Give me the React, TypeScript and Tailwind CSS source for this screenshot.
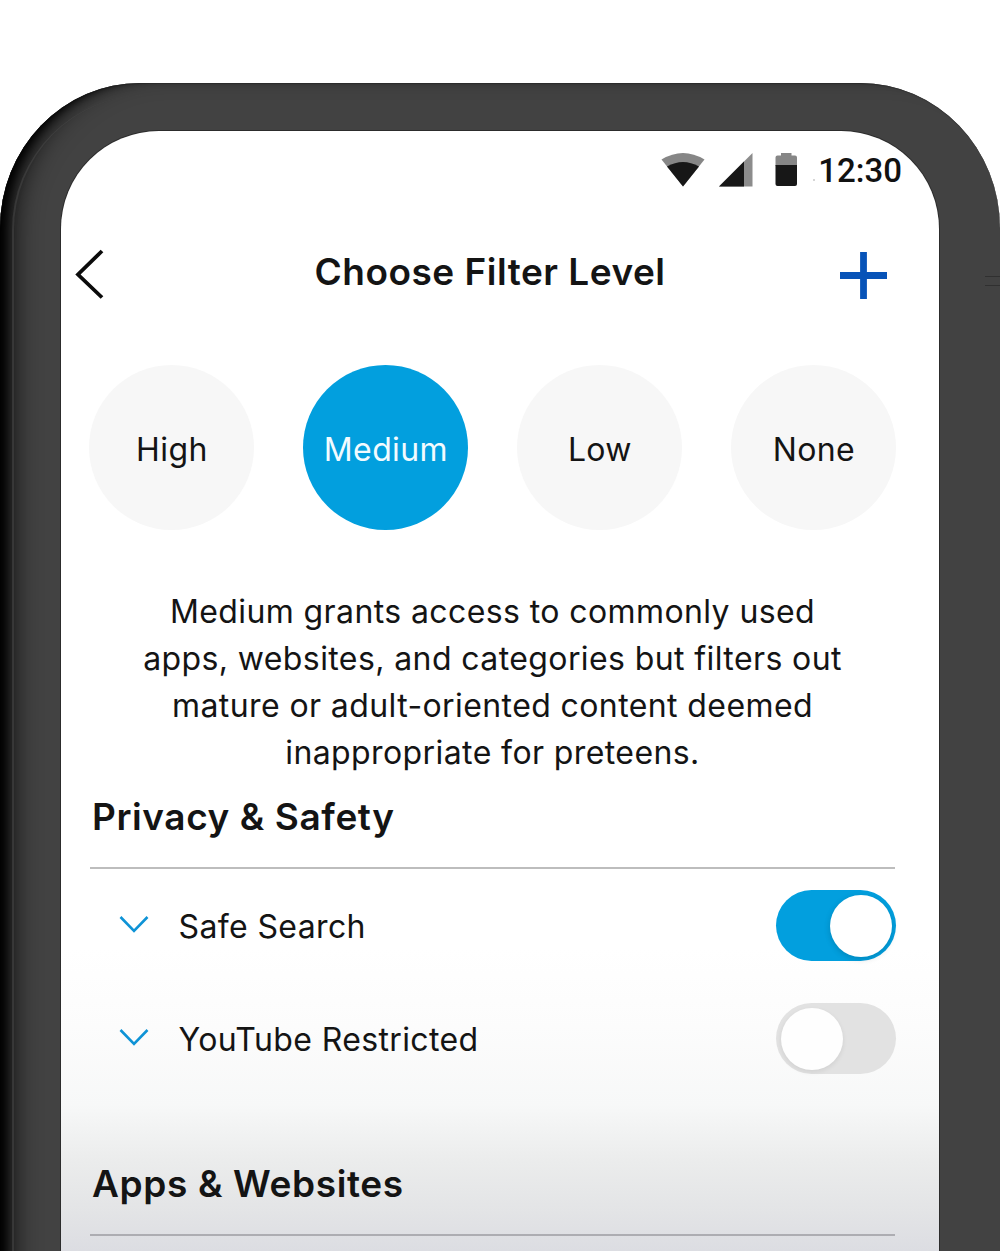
import React from "react";

const levels = ["High", "Medium", "Low", "None"];

function StatusBar() {
  return (
    <div className="flex h-[78px] items-center justify-end pr-[37px]">
      <svg className="mr-[14px] h-[34px] w-[44px]" viewBox="0 0 44 34">
        <path d="M0.5 6.5Q22 -6.5 43.500 6.500L22 33.500Z" fill="#868686" />
        <path d="M6 13.500Q22 4.500 38 13.500L22 33.500Z" fill="#171717" />
      </svg>
      <svg className="mr-[22px] h-[34px] w-[34px]" viewBox="0 0 34 34">
        <path d="M33.500 0V33.500H0Z" fill="#8c8c8c" />
        <path d="M25 8.500V33.500H0Z" fill="#171717" />
      </svg>
      <svg className="mr-[15px] h-[34px] w-[23px]" viewBox="0 0 23 34">
        <path d="M6 0H16.500V2.500H20Q22 2.500 22 4.500V13H0.500V4.500Q0.500 2.500 2.500 2.500H6Z" fill="#868686" />
        <path d="M0.500 12H22V31Q22 33 20 33H2.500Q0.500 33 0.500 31Z" fill="#171717" />
      </svg>
      <span className="mt-[20px] mr-[3px] size-[2px] rounded-full bg-[#c8c8c8]" />
      <span className="font-[Roboto,sans-serif] text-[33px] leading-none font-medium text-[#111]">12:30</span>
    </div>
  );
}

function Header() {
  return (
    <div className="flex h-[130px] items-center justify-between pr-[51px] pl-[14px]">
      <svg className="h-[50px] w-[30px]" viewBox="0 0 30 50" fill="none" stroke="#0b0b0b" strokeWidth="3.8">
        <path d="M27 2L3 25.500L27 48.500" />
      </svg>
      <h1 className="mb-[6px] ml-[35px] text-[37px] leading-none font-semibold tracking-[0.5px] whitespace-nowrap">Choose Filter Level</h1>
      <svg className="mt-[3px] h-[48px] w-[48px]" viewBox="0 0 48 48" fill="#0753b8">
        <path d="M20.100 0H26.900V20.100H47V26.900H26.900V47H20.100V26.900H0V20.100H20.100Z" />
      </svg>
    </div>
  );
}

function SettingRow({ label, on }: { label: string; on: boolean }) {
  return (
    <div className="flex h-[71px] items-center">
      <svg className="-mt-[2px] ml-[29px] h-[17px] w-[30px]" viewBox="0 0 30 17" fill="none" stroke="#0e93d6" strokeWidth="2.600">
        <path d="M1.500 1L15 15L28.500 1" />
      </svg>
      <span className="mt-[3px] ml-[29.5px] text-[32px] leading-none tracking-[0.37px]">{label}</span>
      <div className={on
        ? "ml-auto flex h-[71px] w-[120px] items-center justify-end rounded-full bg-[#029fde] pr-[4px]"
        : "ml-auto flex h-[71px] w-[120px] items-center justify-start rounded-full bg-[#e2e2e2] pl-[5px]"}>
        <div className={on
          ? "size-[62px] rounded-full bg-white shadow-[0_2px_6px_rgba(0,0,0,0.16)]"
          : "size-[62px] rounded-full bg-[#fefefe] shadow-[0_2px_5px_rgba(0,0,0,0.08)]"} />
      </div>
    </div>
  );
}

export default function App() {
  return (
    <main className="h-[1251px] w-[1000px] overflow-hidden bg-white pt-[83px] font-[Inter,sans-serif] text-[#141414]">
      <div className="relative h-[1240px] overflow-hidden rounded-t-[140px_145px] bg-[#424242] px-[61px] pt-[48px] shadow-[inset_11px_0_10px_-5px_#000,inset_28px_0_26px_-14px_rgba(0,0,0,0.75),inset_0_1px_0_#383838]">
        <div className="pointer-events-none absolute top-[12px] left-[12px] h-[1300px] w-[300px] rounded-tl-[135px] border-l-2 border-[#4a4a4a]/50" />
        <div className="absolute top-[193px] right-0 h-[10px] w-[15px] border-y border-[#303030]" />
        <div className="relative h-[1120px] rounded-t-[98px] bg-[linear-gradient(to_bottom,#fff_0%,#fff_73%,#fcfcfc_80%,#f7f8f8_87%,#ebecec_92%,#e3e4e6_96.5%,#dcdde2_100%)] shadow-[0_0_0_1px_#2c2c2c]">
          <StatusBar />
          <Header />
          <div className="mt-[26px] flex justify-between pr-[42.6px] pl-[28.4px]">
            {levels.map((level) => (
              <button
                key={level}
                className={level === "Medium"
                  ? "size-[165px] rounded-full bg-[#029fde] pt-[5px] text-[32px] tracking-[0.37px] text-[#f2fbff]"
                  : "size-[165px] rounded-full bg-[#f7f7f7] pt-[5px] text-[32px] tracking-[0.37px]"}
              >
                {level}
              </button>
            ))}
          </div>
          <p className="mt-[58px] mr-[15px] text-center text-[32px] leading-[47px] tracking-[0.4px] whitespace-nowrap">
            Medium grants access to commonly used<br />
            apps, websites, and categories but filters out<br />
            mature or adult-oriented content deemed<br />
            inappropriate for preteens.
          </p>
          <section className="mr-[44px] ml-[29px]">
            <h2 className="mt-[18px] flex h-[75px] items-start border-b-2 border-[#bdbdbd] pl-[2px] text-[37px] leading-[46px] font-semibold tracking-[0.58px]">Privacy &amp; Safety</h2>
            <div className="-mr-[1px] mt-[21px] flex flex-col gap-[42px]">
              <SettingRow label="Safe Search" on />
              <SettingRow label="YouTube Restricted" on={false} />
            </div>
          </section>
          <section className="mr-[44px] ml-[29px]">
            <h2 className="mt-[87px] flex h-[75px] items-start border-b-2 border-[#adadb2] pl-[2px] text-[37px] leading-[46px] font-semibold tracking-[0.63px]">Apps &amp; Websites</h2>
          </section>
        </div>
      </div>
    </main>
  );
}
